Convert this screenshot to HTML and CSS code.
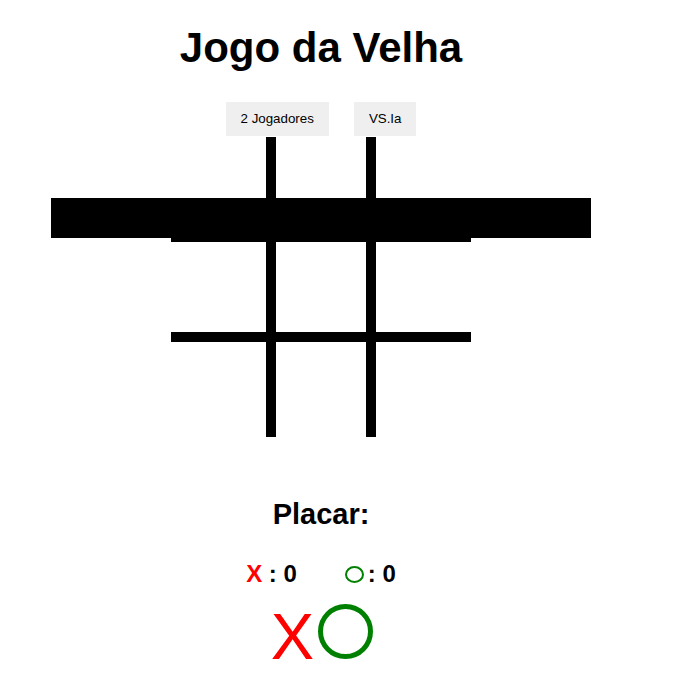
FILE: index.html
```html
<!DOCTYPE html>
<html lang="pt">
<head>
<meta charset="utf-8">
<title>Jogo da Velha</title>
<link rel="stylesheet" href="styles.css">
</head>
<body>
<main class="app">
  <h1 class="title">Jogo da Velha</h1>
  <div class="modes">
    <button class="mode-btn">2 Jogadores</button>
    <button class="mode-btn">VS.Ia</button>
  </div>
  <div class="board">
    <div class="cell c-l r-t"></div>
    <div class="cell c-m r-t"></div>
    <div class="cell c-r r-t"></div>
    <div class="cell c-l r-m"></div>
    <div class="cell c-m r-m"></div>
    <div class="cell c-r r-m"></div>
    <div class="cell c-l r-b"></div>
    <div class="cell c-m r-b"></div>
    <div class="cell c-r r-b"></div>
    <div class="win-line"></div>
  </div>
  <h2 class="score-title">Placar:</h2>
  <div class="scores">
    <span class="score"><span class="mark-x">X</span> : 0</span>
    <span class="score"><span class="mini-o"></span>: 0</span>
  </div>
  <div class="turn">
    <span class="big-x">X</span>
    <span class="big-o"></span>
  </div>
</main>
</body>
</html>
```
FILE: styles.css
```css
html, body {
  margin: 0;
  padding: 0;
  background: #ffffff;
}

body {
  font-family: "Liberation Sans", Arial, sans-serif;
  color: #000000;
}

.app {
  width: 642px;
  display: flex;
  flex-direction: column;
  align-items: center;
}

.title {
  margin: 24px 0 0;
  font-size: 42px;
  line-height: 48px;
  font-weight: bold;
}

.modes {
  margin-top: 30px;
  display: flex;
  gap: 25px;
}

.mode-btn {
  font-family: "Liberation Sans", Arial, sans-serif;
  font-size: 13.333px;
  line-height: 16px;
  padding: 9px 15px;
  border: none;
  background: #efefef;
  color: #000000;
}

.board {
  position: relative;
  margin-top: 1px;
  width: 300px;
  height: 300px;
  display: grid;
  grid-template-columns: repeat(3, 100px);
  grid-template-rows: repeat(3, 100px);
}

.cell {
  box-sizing: border-box;
  border: 0 solid #000000;
}

.c-l { border-right-width: 5px; }
.c-m { border-left-width: 5px; border-right-width: 5px; }
.c-r { border-left-width: 5px; }
.r-t { border-bottom-width: 5px; }
.r-m { border-top-width: 5px; border-bottom-width: 5px; }
.r-b { border-top-width: 5px; }

.win-line {
  position: absolute;
  left: -120px;
  top: 61px;
  width: 540px;
  height: 40px;
  background: #000000;
}

.score-title {
  margin: 60px 0 0;
  font-size: 29px;
  line-height: 34px;
  font-weight: bold;
}

.scores {
  margin-top: 29px;
  display: flex;
  gap: 48px;
  font-size: 24px;
  line-height: 28px;
  font-weight: bold;
}

.mark-x {
  color: #ff0000;
}

.mini-o {
  display: inline-block;
  box-sizing: border-box;
  width: 19px;
  height: 17px;
  border: 2px solid #008000;
  border-radius: 50%;
  margin-right: 4px;
  vertical-align: -1px;
}

.turn {
  margin-top: 16px;
  display: flex;
  align-items: baseline;
  gap: 4px;
  margin-left: 2px;
}

.big-x {
  font-size: 65px;
  line-height: 65px;
  color: #ff0000;
}

.big-o {
  display: inline-block;
  box-sizing: border-box;
  width: 55px;
  height: 55px;
  border: 5px solid #008000;
  border-radius: 50%;
}
```
